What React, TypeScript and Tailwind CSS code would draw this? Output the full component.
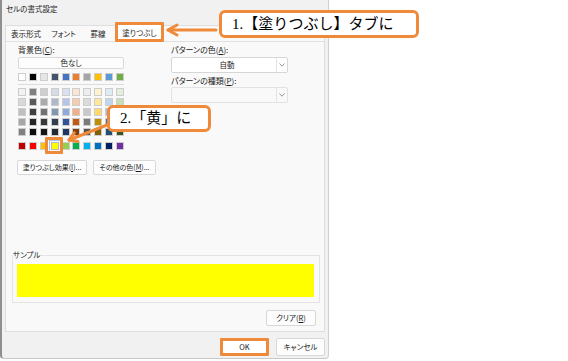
import React from 'react';

// Office theme palette as shown in Excel's Format Cells > Fill tab.
const THEME = ['#FFFFFF', '#000000', '#E7E6E6', '#44546A', '#4472C4', '#ED7D31', '#A5A5A5', '#FFC000', '#5B9BD5', '#70AD47'];
const TINTS = [
  ['#F2F2F2', '#7F7F7F', '#D0CECE', '#D6DCE4', '#D9E1F2', '#FCE4D6', '#EDEDED', '#FFF2CC', '#DDEBF7', '#E2EFDA'],
  ['#D9D9D9', '#595959', '#AEAAAA', '#ADB9CA', '#B4C6E7', '#F8CBAD', '#DBDBDB', '#FFE699', '#BDD7EE', '#C6E0B4'],
  ['#BFBFBF', '#404040', '#757171', '#8497B0', '#8EA9DB', '#F4B084', '#C9C9C9', '#FFD966', '#9BC2E6', '#A9D08E'],
  ['#A6A6A6', '#262626', '#3A3838', '#333F4F', '#305496', '#C65911', '#7B7B7B', '#BF8F00', '#2F75B5', '#548235'],
  ['#808080', '#0D0D0D', '#171616', '#222A35', '#203764', '#833C0C', '#525252', '#806000', '#1F4E78', '#375623'],
];
const STANDARD = ['#C00000', '#FF0000', '#FFC000', '#FFFF00', '#92D050', '#00B050', '#00B0F0', '#0070C0', '#002060', '#7030A0'];

function Swatch({ color }: { color: string }) {
  return <span className="block h-[8px] w-[8px] shrink-0 border border-[#cdcdcd]" style={{ backgroundColor: color }} />;
}

function SwatchRow({ colors }: { colors: string[] }) {
  return (
    <div className="flex gap-[2.9px]">
      {colors.map((c, i) => (
        <Swatch key={i} color={c} />
      ))}
    </div>
  );
}

function Chevron() {
  return (
    <svg width="6" height="4" viewBox="0 0 6 4" className="text-[#8a8a8a]">
      <polyline points="0.5,0.5 3,3.2 5.5,0.5" fill="none" stroke="currentColor" strokeWidth="0.9" />
    </svg>
  );
}

function Select({ value, disabled = false }: { value?: string; disabled?: boolean }) {
  return (
    <div
      className={`flex h-[16px] w-[117px] items-stretch rounded-[2px] border ${
        disabled ? 'border-[#e2e2e2] bg-[#f9f9f9]' : 'border-[#d6d6d6] bg-white'
      }`}
    >
      <div className="flex flex-1 items-center justify-center pl-[6px] text-[7.5px] text-[#222]">{value}</div>
      <div className="flex w-[11px] items-center justify-center border-l border-[#e4e4e4]">
        <Chevron />
      </div>
    </div>
  );
}

function Btn({ children, className = '' }: { children: React.ReactNode; className?: string }) {
  return (
    <div
      className={`flex shrink-0 items-center justify-center rounded-[2px] border border-[#d8d8d8] bg-[#fdfdfd] text-[#1b1b1b] ${className}`}
    >
      {children}
    </div>
  );
}

export default function App() {
  return (
    <div className="relative h-[361px] w-[568px] overflow-hidden bg-white font-['Noto_Sans_CJK_JP',sans-serif] [font-feature-settings:'palt']">
      {/* dialog */}
      <div className="flex h-[359px] w-[329px] flex-col rounded-b-[4px] border-b border-l-2 border-r border-b-[#c8c8c8] border-l-[#8f8f8f] border-r-[#cfcfcf] bg-[#f1f1f1]">
        <div className="h-[25px] pl-[4px] pt-[4px] text-[7.5px] leading-[10px] text-[#1b1b1b]">セルの書式設定</div>

        {/* tab control */}
        <div className="ml-[3px] flex h-[307px] w-[320px] flex-col border border-[#dedede] bg-[#f9f9f9]">
          <div className="flex h-[15px] items-start text-[7.5px] leading-[15px] text-[#1b1b1b]">
            <div className="w-[40px] text-center">表示形式</div>
            <div className="w-[35px] text-center">フォント</div>
            <div className="w-[34px] text-center">罫線</div>
            <div className="relative z-10 -mt-[4px] flex h-[20px] w-[49px] items-center justify-center rounded-[1px] border-[3px] border-[#ef8a3a] bg-white">
              塗りつぶし
            </div>
          </div>

          <div className="flex flex-1 flex-col border-t border-[#e0e0e0] px-[5px] pb-[5px]">
            <div className="flex">
              {/* background colour */}
              <div className="ml-[7px] flex w-[106px] flex-col">
                <div className="mt-[3px] h-[10px] text-[8px] leading-[10px] text-[#1b1b1b]">
                  背景色(<u>C</u>):
                </div>
                <Btn className="mt-[2px] h-[12px] w-[106px] text-[7.5px]">色なし</Btn>
                <div className="mt-[4px]">
                  <SwatchRow colors={THEME} />
                </div>
                <div className="mt-[3px] h-px w-[106px] bg-[#dcdcdc]" />
                <div className="mt-[3px] flex flex-col gap-[2px]">
                  {TINTS.map((row, i) => (
                    <SwatchRow key={i} colors={row} />
                  ))}
                </div>
                <div className="mt-[6px] flex gap-[2.9px]">
                  {STANDARD.map((c, i) =>
                    c === '#FFFF00' ? (
                      <span key={i} className="relative block h-[8px] w-[8px] shrink-0">
                        <span className="block h-[8px] w-[8px] border border-[#b9b9b9] bg-[#FFFF00] outline outline-1 outline-offset-[1px] outline-[#a8c6e6]" />
                        <span className="absolute -left-[6px] -top-[5px] h-[17px] w-[18px] rounded-[1px] border-[3px] border-[#ef8a3a]" />
                      </span>
                    ) : (
                      <Swatch key={i} color={c} />
                    ),
                  )}
                </div>
                <div className="-ml-px mt-[10px] flex gap-[6px]">
                  <Btn className="h-[15px] w-[70px] whitespace-nowrap text-[7px]">
                    塗りつぶし効果(<u>I</u>)...
                  </Btn>
                  <Btn className="h-[15px] w-[63px] whitespace-nowrap text-[7px]">
                    その他の色(<u>M</u>)...
                  </Btn>
                </div>
              </div>

              {/* pattern */}
              <div className="ml-[47px] flex flex-col">
                <div className="mt-[3px] h-[10px] text-[8px] leading-[10px] text-[#1b1b1b]">
                  パターンの色(<u>A</u>):
                </div>
                <div className="mt-[2px]">
                  <Select value="自動" />
                </div>
                <div className="mt-[3px] h-[10px] text-[8px] leading-[10px] text-[#1b1b1b]">
                  パターンの種類(<u>P</u>):
                </div>
                <div className="mt-[1px]">
                  <Select disabled />
                </div>
              </div>
            </div>

            {/* sample */}
            <fieldset className="mt-auto ml-px w-[308px] border border-[#e4e4e4] px-0 pb-[5px]">
              <legend className="ml-0 h-[10px] px-0 text-[7.5px] leading-[10px] text-[#1b1b1b]">サンプル</legend>
              <div className="ml-[4px] mt-[4px] h-[33px] w-[297px] bg-[#ffff00]" />
            </fieldset>
            <div className="mt-[7px] flex justify-end pr-[3px]">
              <Btn className="h-[16px] w-[50px] text-[7.5px]">
                クリア(<u>R</u>)
              </Btn>
            </div>
          </div>
        </div>

        {/* footer */}
        <div className="flex flex-1 items-start justify-end gap-[7px] pr-[3px] pt-[6px]">
          <div className="flex h-[18px] w-[49px] items-center justify-center rounded-[1px] border-[3px] border-[#ef8a3a] bg-white text-[7.5px] text-[#1b1b1b]">
            OK
          </div>
          <Btn className="h-[18px] w-[49px] text-[7.5px]">キャンセル</Btn>
        </div>
      </div>

      {/* annotations */}
      <svg className="pointer-events-none absolute left-0 top-0" width="568" height="361" viewBox="0 0 568 361">
        <g fill="none" stroke="#ef8a3a" strokeWidth="3" strokeLinecap="round" strokeLinejoin="round">
          <line x1="216" y1="30" x2="168" y2="30" />
          <polyline points="177,25 168,30 177,35" />
          <line x1="107" y1="125" x2="69" y2="140" />
          <polyline points="74.3,132.8 69,140 77.9,141.6" />
        </g>
      </svg>

      <div className="absolute left-[219px] top-[10px] flex h-[28px] w-[200px] items-center rounded-[6px] border-[3px] border-[#ef8a3a] bg-white pl-[10px] font-['Liberation_Serif','Noto_Sans_CJK_JP',serif] text-[15px] text-black [font-feature-settings:normal]">
        1.【塗りつぶし】タブに
      </div>
      <div className="absolute left-[107px] top-[105px] flex h-[27px] w-[104px] items-center rounded-[6px] border-[3px] border-[#ef8a3a] bg-white pl-[10px] font-['Liberation_Serif','Noto_Sans_CJK_JP',serif] text-[15px] text-black [font-feature-settings:normal]">
        2.「黄」に
      </div>
    </div>
  );
}
